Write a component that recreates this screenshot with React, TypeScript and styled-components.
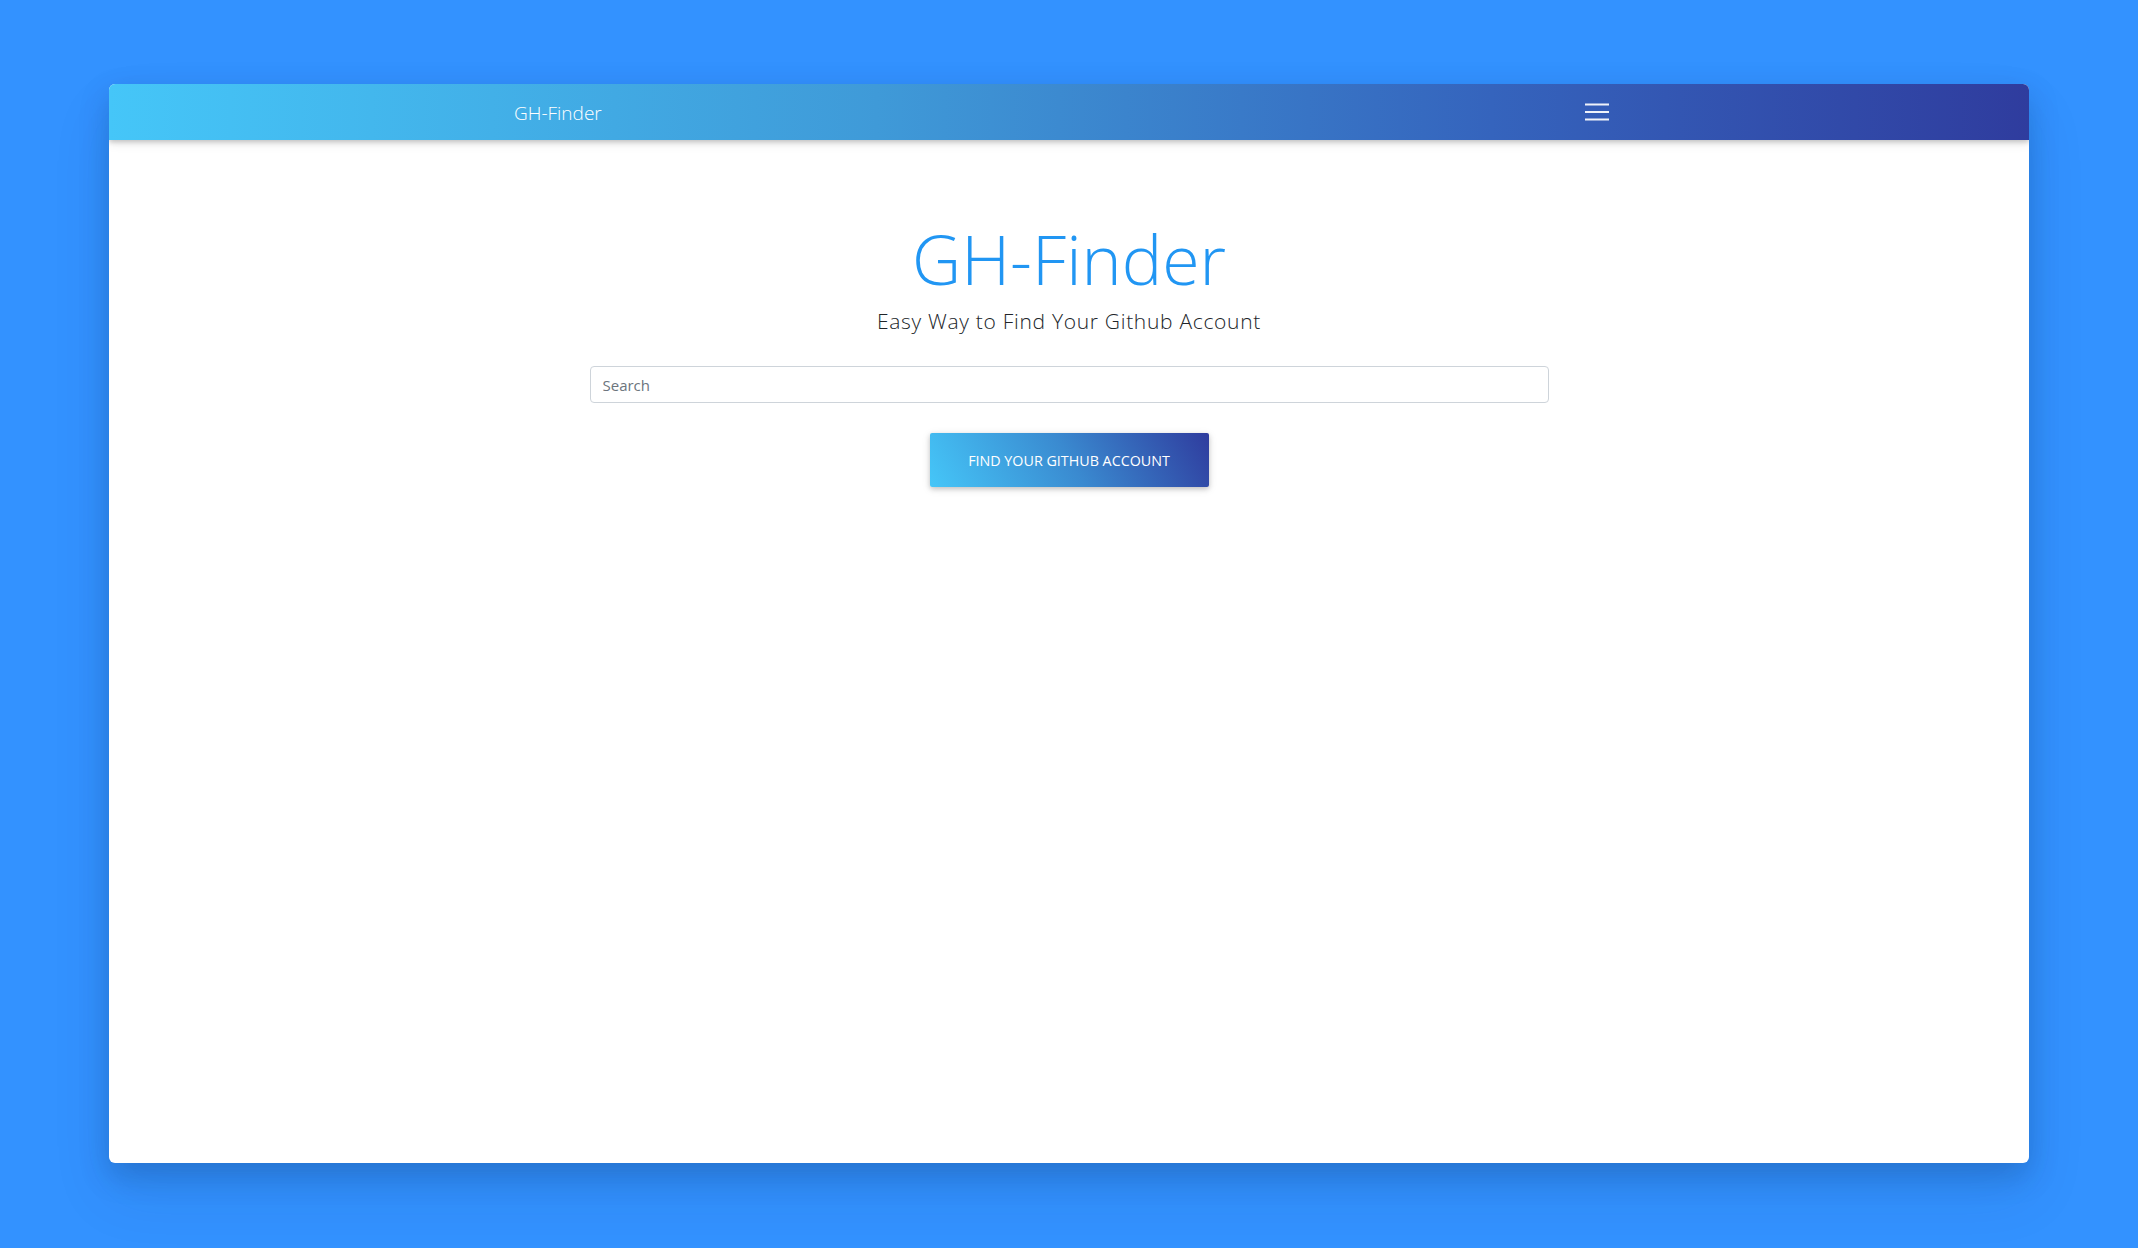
import React from "react";
import styled, { createGlobalStyle } from "styled-components";

const GlobalStyle = createGlobalStyle`
  html, body {
    margin: 0;
    padding: 0;
    background: #3392ff;
  }
  * { box-sizing: border-box; }
`;

const Page = styled.div`
  min-height: 1248px;
  padding: 84px 109px 85px;
  background: #3392ff;
  font-family: "Open Sans", "Noto Sans", sans-serif;
`;

const Window = styled.div`
  width: 1920px;
  height: 1079px;
  background: #ffffff;
  border-radius: 6px;
  overflow: hidden;
  box-shadow: 0 12px 30px rgba(10, 40, 90, 0.22), 0 30px 60px rgba(10, 40, 90, 0.1);
  display: flex;
  flex-direction: column;
`;

const NavBar = styled.header`
  position: relative;
  z-index: 2;
  height: 56px;
  flex: none;
  background: linear-gradient(to right, #45c6f8 0%, #3f9ad8 40%, #3564bd 72%, #2f3c9e 100%);
  box-shadow: 0 2px 5px rgba(0, 0, 0, 0.2), 0 4px 10px rgba(0, 0, 0, 0.08);
  display: flex;
  justify-content: center;
`;

const NavInner = styled.div`
  width: 1110px;
  height: 100%;
  display: flex;
  align-items: center;
  justify-content: space-between;
`;

const Brand = styled.span`
  color: #ffffff;
  font-size: 19px;
  font-weight: 300;
  line-height: 1;
  margin-top: 2px;
`;

const Toggler = styled.button`
  background: transparent;
  border: 1px solid transparent;
  padding: 4px 14px 4px 12px;
  margin-top: -1px;
  display: flex;
  align-items: center;
  cursor: pointer;
`;

const Main = styled.main`
  flex: 1;
  display: flex;
  flex-direction: column;
  align-items: center;
  padding-top: 85px;
`;

const Title = styled.h1`
  margin: 0;
  font-size: 68px;
  font-weight: 300;
  line-height: 1;
  color: #2196f3;
`;

const Lead = styled.p`
  margin: 16px 0 0;
  font-size: 21px;
  font-weight: 300;
  letter-spacing: 0.7px;
  line-height: 24px;
  color: #212529;
`;

const SearchInput = styled.input`
  margin-top: 33px;
  width: 959px;
  height: 37px;
  padding: 0 12px;
  border: 1px solid #ced4da;
  border-radius: 4px;
  font-family: "Open Sans", "Noto Sans", sans-serif;
  font-size: 15px;
  color: #495057;
  outline: none;
  &::placeholder {
    color: #6c757d;
  }
`;

const FindButton = styled.button`
  margin-top: 30px;
  width: 279px;
  height: 54px;
  border: none;
  border-radius: 2px;
  background: linear-gradient(60deg, #45c6f8 0%, #3a8ad0 50%, #2f3c9e 100%);
  color: #ffffff;
  font-family: "Open Sans", "Noto Sans", sans-serif;
  font-size: 14.3px;
  font-weight: 400;
  text-transform: uppercase;
  letter-spacing: 0;
  box-shadow: 0 2px 5px rgba(0, 0, 0, 0.18), 0 2px 10px rgba(0, 0, 0, 0.1);
  cursor: pointer;
`;

const MenuIcon = () => (
  <svg width="24" height="18" viewBox="0 0 24 18" fill="none">
    <path d="M0 1.5h24M0 9h24M0 16.5h24" stroke="rgba(255,255,255,0.92)" strokeWidth="2" />
  </svg>
);

export default function App() {
  return (
    <>
      <GlobalStyle />
      <Page>
        <Window>
          <NavBar>
            <NavInner>
              <Brand>GH-Finder</Brand>
              <Toggler aria-label="Toggle navigation">
                <MenuIcon />
              </Toggler>
            </NavInner>
          </NavBar>
          <Main>
            <Title>GH-Finder</Title>
            <Lead>Easy Way to Find Your Github Account</Lead>
            <SearchInput placeholder="Search" />
            <FindButton>Find your github account</FindButton>
          </Main>
        </Window>
      </Page>
    </>
  );
}
